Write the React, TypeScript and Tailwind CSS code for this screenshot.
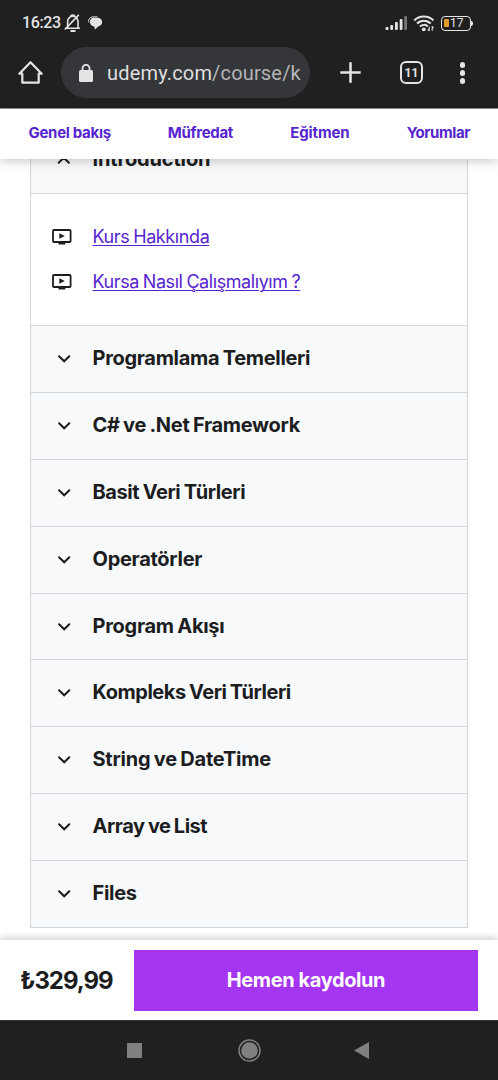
import React from 'react';
import clsx from 'clsx';

const tabs = [
  { label: 'Genel bakış', tracking: 'tracking-[-0.3px]' },
  { label: 'Müfredat', tracking: 'tracking-[-0.3px]' },
  { label: 'Eğitmen', tracking: 'tracking-[-0.1px]' },
  { label: 'Yorumlar', tracking: 'tracking-[-0.4px]' },
];

const lectures = [
  { title: 'Kurs Hakkında', tracking: 'tracking-[-0.4px]' },
  { title: 'Kursa Nasıl Çalışmalıyım ?', tracking: 'tracking-[-0.42px]' },
];

const sections = [
  { title: 'Programlama Temelleri', tracking: 'tracking-[-0.31px]' },
  { title: 'C# ve .Net Framework', tracking: 'tracking-[-0.3px]' },
  { title: 'Basit Veri Türleri', tracking: 'tracking-[-0.4px]' },
  { title: 'Operatörler', tracking: 'tracking-[-0.28px]' },
  { title: 'Program Akışı', tracking: 'tracking-[-0.28px]' },
  { title: 'Kompleks Veri Türleri', tracking: 'tracking-[-0.46px]' },
  { title: 'String ve DateTime', tracking: 'tracking-[-0.24px]' },
  { title: 'Array ve List', tracking: 'tracking-[-0.46px]' },
  { title: 'Files', tracking: 'tracking-[-0.3px]' },
];

function StatusBar() {
  return (
    <div className="flex h-[46px] items-center pl-[22px] pr-[25px] text-[#e4e4e4]">
      <span className="font-[Roboto] text-[16px] font-medium leading-none tracking-[-0.4px]">16:23</span>
      <svg className="ml-[3px] h-[18px] w-[18px]" viewBox="0 0 18 18" fill="none" stroke="currentColor" strokeWidth="1.6">
        <path d="M1.500 14.300h14.500M3.600 13.500V7.500a5 5 0 0 1 10.400 0v6M6.500 2.500C6.800.6 10.600.6 11 2.500" />
        <path d="M.8 15.500 14.800.9" />
        <path d="M6.500 17h5" strokeWidth="2" />
      </svg>
      <svg className="ml-[6px] h-[14px] w-[14px]" viewBox="0 0 14 14" fill="currentColor">
        <path d="M5.500 1.800h3.900a4.300 4.300 0 0 1 .8 8.600L7 13.400 6.300 10.400C3.300 10.400 2 8.300 2 6.100c0-2.400 1.300-4.300 3.500-4.300Z" />
        <path d="M.9 6.500C.2 3 2 1 5 .9h4.500" fill="none" stroke="currentColor" strokeWidth="1" />
      </svg>
      <svg className="ml-auto h-[16px] w-[23px]" viewBox="0 0 23 16" fill="currentColor">
        <rect x="0.500" y="12" width="3" height="3" rx="1" />
        <rect x="5.300" y="10" width="2.800" height="5" rx="1" />
        <rect x="10" y="7" width="2.800" height="8" rx="1" />
        <rect x="14.700" y="4" width="2.800" height="11" rx="1" />
        <rect x="19.200" y="1" width="2.800" height="14" rx="1" className="text-[#777]" />
      </svg>
      <svg className="ml-[5px] h-[17px] w-[22px]" viewBox="0 0 22 17" fill="none" stroke="currentColor" strokeWidth="2.100">
        <path d="M1.200 5.400C6.500.1 15.200.1 20.500 5.400" />
        <path d="M4 8.600c3.800-3.800 9.900-3.800 13.700 0" />
        <path d="M7 11.600c2.300-2.200 5.500-2.200 7.700-.2" />
        <circle cx="10.800" cy="14.300" r="1.900" fill="currentColor" stroke="none" />
        <path d="M16.200 11.500v4.500M14.800 14.300l1.400 1.600M19.200 15.800v-4.500M20.600 13l-1.400-1.600" strokeWidth="1.100" />
      </svg>
      <div className="ml-[6px] flex items-center">
        <div className="flex h-[15px] w-[30px] items-center rounded-[4px] border-[1.500px] border-[#e4e4e4] pl-[2px]">
          <span className="h-[8px] w-[5px] rounded-[1px] bg-[#e39b2b]" />
          <span className="ml-px font-[Roboto] text-[12px] leading-none">17</span>
        </div>
        <span className="h-[5px] w-[2px] rounded-r-full bg-[#e4e4e4]" />
      </div>
    </div>
  );
}

function BrowserBar() {
  return (
    <div className="flex h-[62px] items-start pl-[18px] pr-[33px] pt-[1px] text-[#e4e4e4]">
      <svg className="mt-[13px] h-[25px] w-[25px]" viewBox="0 0 25 25" fill="none" stroke="currentColor" strokeWidth="2.200" strokeLinejoin="round">
        <path d="M1.300 13.700 12.500 2.200l11.200 11.500H20.700V22.700H4.300V13.700Z" />
      </svg>
      <div className="ml-[18px] flex h-[51px] w-[249px] items-center rounded-full bg-[#35363a] pl-[18px]">
        <svg className="h-[18px] w-[14px]" viewBox="0 0 14 18">
          <rect x="0" y="6" width="14" height="12" rx="1.500" fill="currentColor" />
          <path d="M3.500 7V4.300a3.500 3.500 0 0 1 7 0V7" fill="none" stroke="currentColor" strokeWidth="1.800" />
        </svg>
        <span className="ml-[14px] whitespace-nowrap pt-px font-[Roboto] text-[20px] tracking-[0.17px] text-[#dfdfdf]">
          udemy.com<span className="text-[#b4b5b7]">/course/k</span>
        </span>
      </div>
      <svg className="ml-[30px] mt-[15px] h-[21px] w-[21px]" viewBox="0 0 21 21" fill="none" stroke="currentColor" strokeWidth="2.500">
        <path d="M10.500.3v20.400M.3 10.500h20.400" />
      </svg>
      <div className="ml-[39px] mt-[14px] flex h-[23px] w-[23px] items-center justify-center rounded-[6px] border-2 border-[#e4e4e4] font-[Roboto] text-[12px] font-bold leading-none">
        11
      </div>
      <div className="ml-auto mt-[15px] flex flex-col gap-[2.500px]">
        <span className="h-[5.500px] w-[5.500px] rounded-full bg-[#e4e4e4]" />
        <span className="h-[5.500px] w-[5.500px] rounded-full bg-[#e4e4e4]" />
        <span className="h-[5.500px] w-[5.500px] rounded-full bg-[#e4e4e4]" />
      </div>
    </div>
  );
}

function Chevron({ up = false }: { up?: boolean }) {
  return (
    <svg
      className={clsx('h-[8px] w-[14px] shrink-0', up && 'rotate-180')}
      viewBox="0 0 14 8"
      fill="none"
      stroke="#1c1d1f"
      strokeWidth="2"
      strokeLinecap="round"
    >
      <path d="M2.100 1.200 7.200 6.300l5.100-5.100" />
    </svg>
  );
}

function VideoIcon() {
  return (
    <svg className="h-[16px] w-[20px] shrink-0" viewBox="0 0 20 16">
      <rect x="1" y="1" width="17.600" height="12" rx="1" fill="none" stroke="#1c1d1f" strokeWidth="1.800" />
      <path d="M7.300 4.200v5.600L12.800 7Z" fill="#1c1d1f" />
      <path d="M6.500 13h6.800v2.500H6.500Z" fill="#1c1d1f" />
    </svg>
  );
}

function App() {
  return (
    <div className="flex h-[1080px] w-[498px] flex-col overflow-hidden bg-white font-[Inter,sans-serif] text-[#1c1d1f]">
      <header className="h-[109px] shrink-0 border-b border-[#909090] bg-[#202020]">
        <StatusBar />
        <BrowserBar />
      </header>

      <nav className="relative z-10 flex h-[50px] shrink-0 items-center justify-between bg-white pb-[2px] pl-[28.500px] pr-[28px] text-[15px] font-bold text-[#5624d0] shadow-[0_2px_10px_rgba(0,0,0,0.22)]">
        {tabs.map((tab) => (
          <a key={tab.label} className={tab.tracking}>{tab.label}</a>
        ))}
      </nav>

      <main className="min-h-0 flex-1 overflow-hidden px-[30px]">
        <div className="-mt-[33px] border border-[#d1d7dc]">
          <div className="flex h-[67px] items-center border-b border-[#d1d7dc] bg-[#f7f9fa] pl-[26px]">
            <Chevron up />
            <h3 className="ml-[21.500px] pb-[2px] text-[20px] font-bold tracking-[-0.15px]">Introduction</h3>
          </div>
          <ul className="flex h-[131px] flex-col gap-[18px] pl-[21px] pt-[29px]">
            {lectures.map((lecture) => (
              <li key={lecture.title} className="flex h-[27px] items-center">
                <VideoIcon />
                <a
                  className={clsx(
                    'ml-[20.500px] text-[18px] text-[#5624d0] underline decoration-1 underline-offset-[2px] [word-spacing:-0.8px]',
                    lecture.tracking
                  )}
                >
                  {lecture.title}
                </a>
              </li>
            ))}
          </ul>
          {sections.map((section) => (
            <div
              key={section.title}
              className="flex h-[66.900px] items-center border-t border-[#d1d7dc] bg-[#f7f9fa] pl-[26px]"
            >
              <Chevron />
              <h3 className={clsx('ml-[21.500px] pb-[2px] text-[20px] font-bold [word-spacing:-1px]', section.tracking)}>
                {section.title}
              </h3>
            </div>
          ))}
        </div>
      </main>

      <footer className="relative z-10 flex h-[80px] shrink-0 items-center bg-white pl-[20px] pr-[20px] shadow-[0_-2px_8px_rgba(0,0,0,0.2)]">
        <span className="w-[114px] whitespace-nowrap pt-[2px] text-[24px] font-bold tracking-[-1.05px]">₺329,99</span>
        <button className="h-[61px] flex-1 bg-[#a435f0] text-[20px] font-bold tracking-[-0.4px] text-white">
          Hemen kaydolun
        </button>
      </footer>

      <div className="flex h-[60px] shrink-0 items-center border-t border-[#3c3c3c] bg-[#202020] pl-[127px] text-[#808080]">
        <span className="h-[15px] w-[15px] bg-[#808080]" />
        <svg className="ml-[96px] h-[23px] w-[23px]" viewBox="0 0 23 23">
          <circle cx="11.500" cy="11.500" r="10.500" fill="none" stroke="currentColor" strokeWidth="1.500" />
          <circle cx="11.500" cy="11.500" r="8.300" fill="currentColor" />
        </svg>
        <svg className="ml-[93px] h-[17px] w-[15px]" viewBox="0 0 15 17" fill="currentColor">
          <path d="M15 0v17L0 8.500Z" />
        </svg>
      </div>
    </div>
  );
}

export default App;
